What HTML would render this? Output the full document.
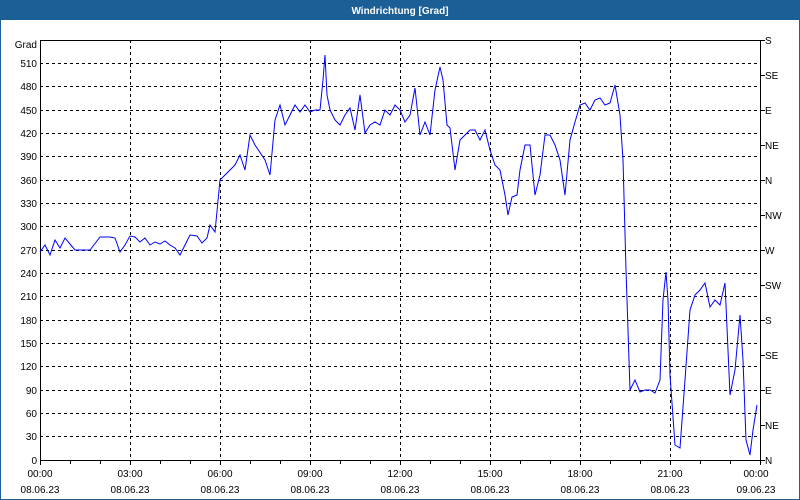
<!DOCTYPE html>
<html><head><meta charset="utf-8"><style>
html,body{margin:0;padding:0;width:800px;height:500px;overflow:hidden;background:#fff}
svg{display:block}
text{font-family:"Liberation Sans","DejaVu Sans",sans-serif;font-size:10px;fill:#000}
</style></head><body>
<svg width="800" height="500" viewBox="0 0 800 500">
<rect x="0" y="0" width="800" height="500" fill="#1c5f96"/>
<rect x="1" y="20" width="798" height="479" fill="#fff"/>
<text x="400" y="14" text-anchor="middle" style="fill:#fff;font-weight:bold;font-size:10px">Windrichtung [Grad]</text>
<g stroke="#000" stroke-width="1" stroke-dasharray="3,3" fill="none">
<path d="M40,63.5H760M40,86.5H760M40,110.5H760M40,133.5H760M40,156.5H760M40,180.5H760M40,203.5H760M40,226.5H760M40,250.5H760M40,273.5H760M40,296.5H760M40,320.5H760M40,343.5H760M40,366.5H760M40,390.5H760M40,413.5H760M40,436.5H760"/>
<path d="M130.5,40V460M220.5,40V460M310.5,40V460M400.5,40V460M490.5,40V460M580.5,40V460M670.5,40V460"/>
</g>
<rect x="40.5" y="40.5" width="720" height="420" fill="none" stroke="#000"/>
<g stroke="#000" fill="none">
<path d="M40.5,460V465M70.5,460V464M100.5,460V464M130.5,460V465M160.5,460V464M190.5,460V464M220.5,460V465M250.5,460V464M280.5,460V464M310.5,460V465M340.5,460V464M370.5,460V464M400.5,460V465M430.5,460V464M460.5,460V464M490.5,460V465M520.5,460V464M550.5,460V464M580.5,460V465M610.5,460V464M640.5,460V464M670.5,460V465M700.5,460V464M730.5,460V464M760.5,460V465"/>
<path d="M760,40.5H765M760,75.5H765M760,110.5H765M760,145.5H765M760,180.5H765M760,215.5H765M760,250.5H765M760,285.5H765M760,320.5H765M760,355.5H765M760,390.5H765M760,425.5H765M760,460.5H765"/>
</g>
<g text-anchor="end">
<text x="37" y="48">Grad</text>
<text x="37" y="67">510</text><text x="37" y="90">480</text><text x="37" y="114">450</text><text x="37" y="137">420</text><text x="37" y="160">390</text><text x="37" y="184">360</text><text x="37" y="207">330</text><text x="37" y="230">300</text><text x="37" y="254">270</text><text x="37" y="277">240</text><text x="37" y="300">210</text><text x="37" y="324">180</text><text x="37" y="347">150</text><text x="37" y="370">120</text><text x="37" y="394">90</text><text x="37" y="417">60</text><text x="37" y="440">30</text><text x="37" y="464">0</text>
</g>
<g>
<text x="765" y="44">S</text><text x="765" y="79">SE</text><text x="765" y="114">E</text><text x="765" y="149">NE</text><text x="765" y="184">N</text><text x="765" y="219">NW</text><text x="765" y="254">W</text><text x="765" y="289">SW</text><text x="765" y="324">S</text><text x="765" y="359">SE</text><text x="765" y="394">E</text><text x="765" y="429">NE</text><text x="765" y="464">N</text>
</g>
<g text-anchor="middle">
<text x="40" y="477">00:00</text><text x="130" y="477">03:00</text><text x="220" y="477">06:00</text><text x="310" y="477">09:00</text><text x="400" y="477">12:00</text><text x="490" y="477">15:00</text><text x="580" y="477">18:00</text><text x="670" y="477">21:00</text><text x="756" y="477">00:00</text>
<text x="40" y="493">08.06.23</text><text x="130" y="493">08.06.23</text><text x="220" y="493">08.06.23</text><text x="310" y="493">08.06.23</text><text x="400" y="493">08.06.23</text><text x="490" y="493">08.06.23</text><text x="580" y="493">08.06.23</text><text x="670" y="493">08.06.23</text><text x="756" y="493">09.06.23</text>
</g>
<polyline fill="none" stroke="#0000ff" stroke-width="1" points="40,252 45,245 50,255 55,240 60,248 65,238 70,244 75,250 80,250 90,250 100,237 110,237 115,238 120,252 125,245 130,236 135,237 140,242 145,238 150,245 155,242 160,244 165,241 170,245 175,248 180,255 185,245 190,235 197,236 202,243 207,238 210,225 215,232 220,180 225,175 230,170 235,165 240,155 245,170 250,135 255,145 265,160 270,175 275,120 280,105 285,125 290,115 295,105 300,112 305,105 310,112 315,110 320,110 323,80 325,55 327,95 330,110 335,120 340,125 345,115 350,108 355,130 360,95 365,133 370,125 375,122 380,125 385,110 390,115 395,105 400,110 405,122 410,115 415,88 420,135 425,122 430,135 435,90 440,67 443,80 447,125 450,128 455,170 460,140 465,135 470,130 475,130 480,140 485,130 490,150 495,165 500,170 505,195 508,215 512,197 517,195 520,170 525,145 530,145 535,195 540,175 545,135 550,135 555,145 560,160 565,195 570,140 575,122 580,105 585,103 590,110 595,100 600,98 605,105 610,103 615,85 620,115 623,160 626,270 630,390 635,380 640,392 645,390 650,390 655,393 660,380 663,300 666,272 668,300 670,375 675,445 680,448 685,380 690,310 695,295 700,290 705,283 710,307 715,300 720,305 725,283 730,395 735,370 740,315 743,360 746,440 750,455 753,430 757,405"/>
</svg>
</body></html>
